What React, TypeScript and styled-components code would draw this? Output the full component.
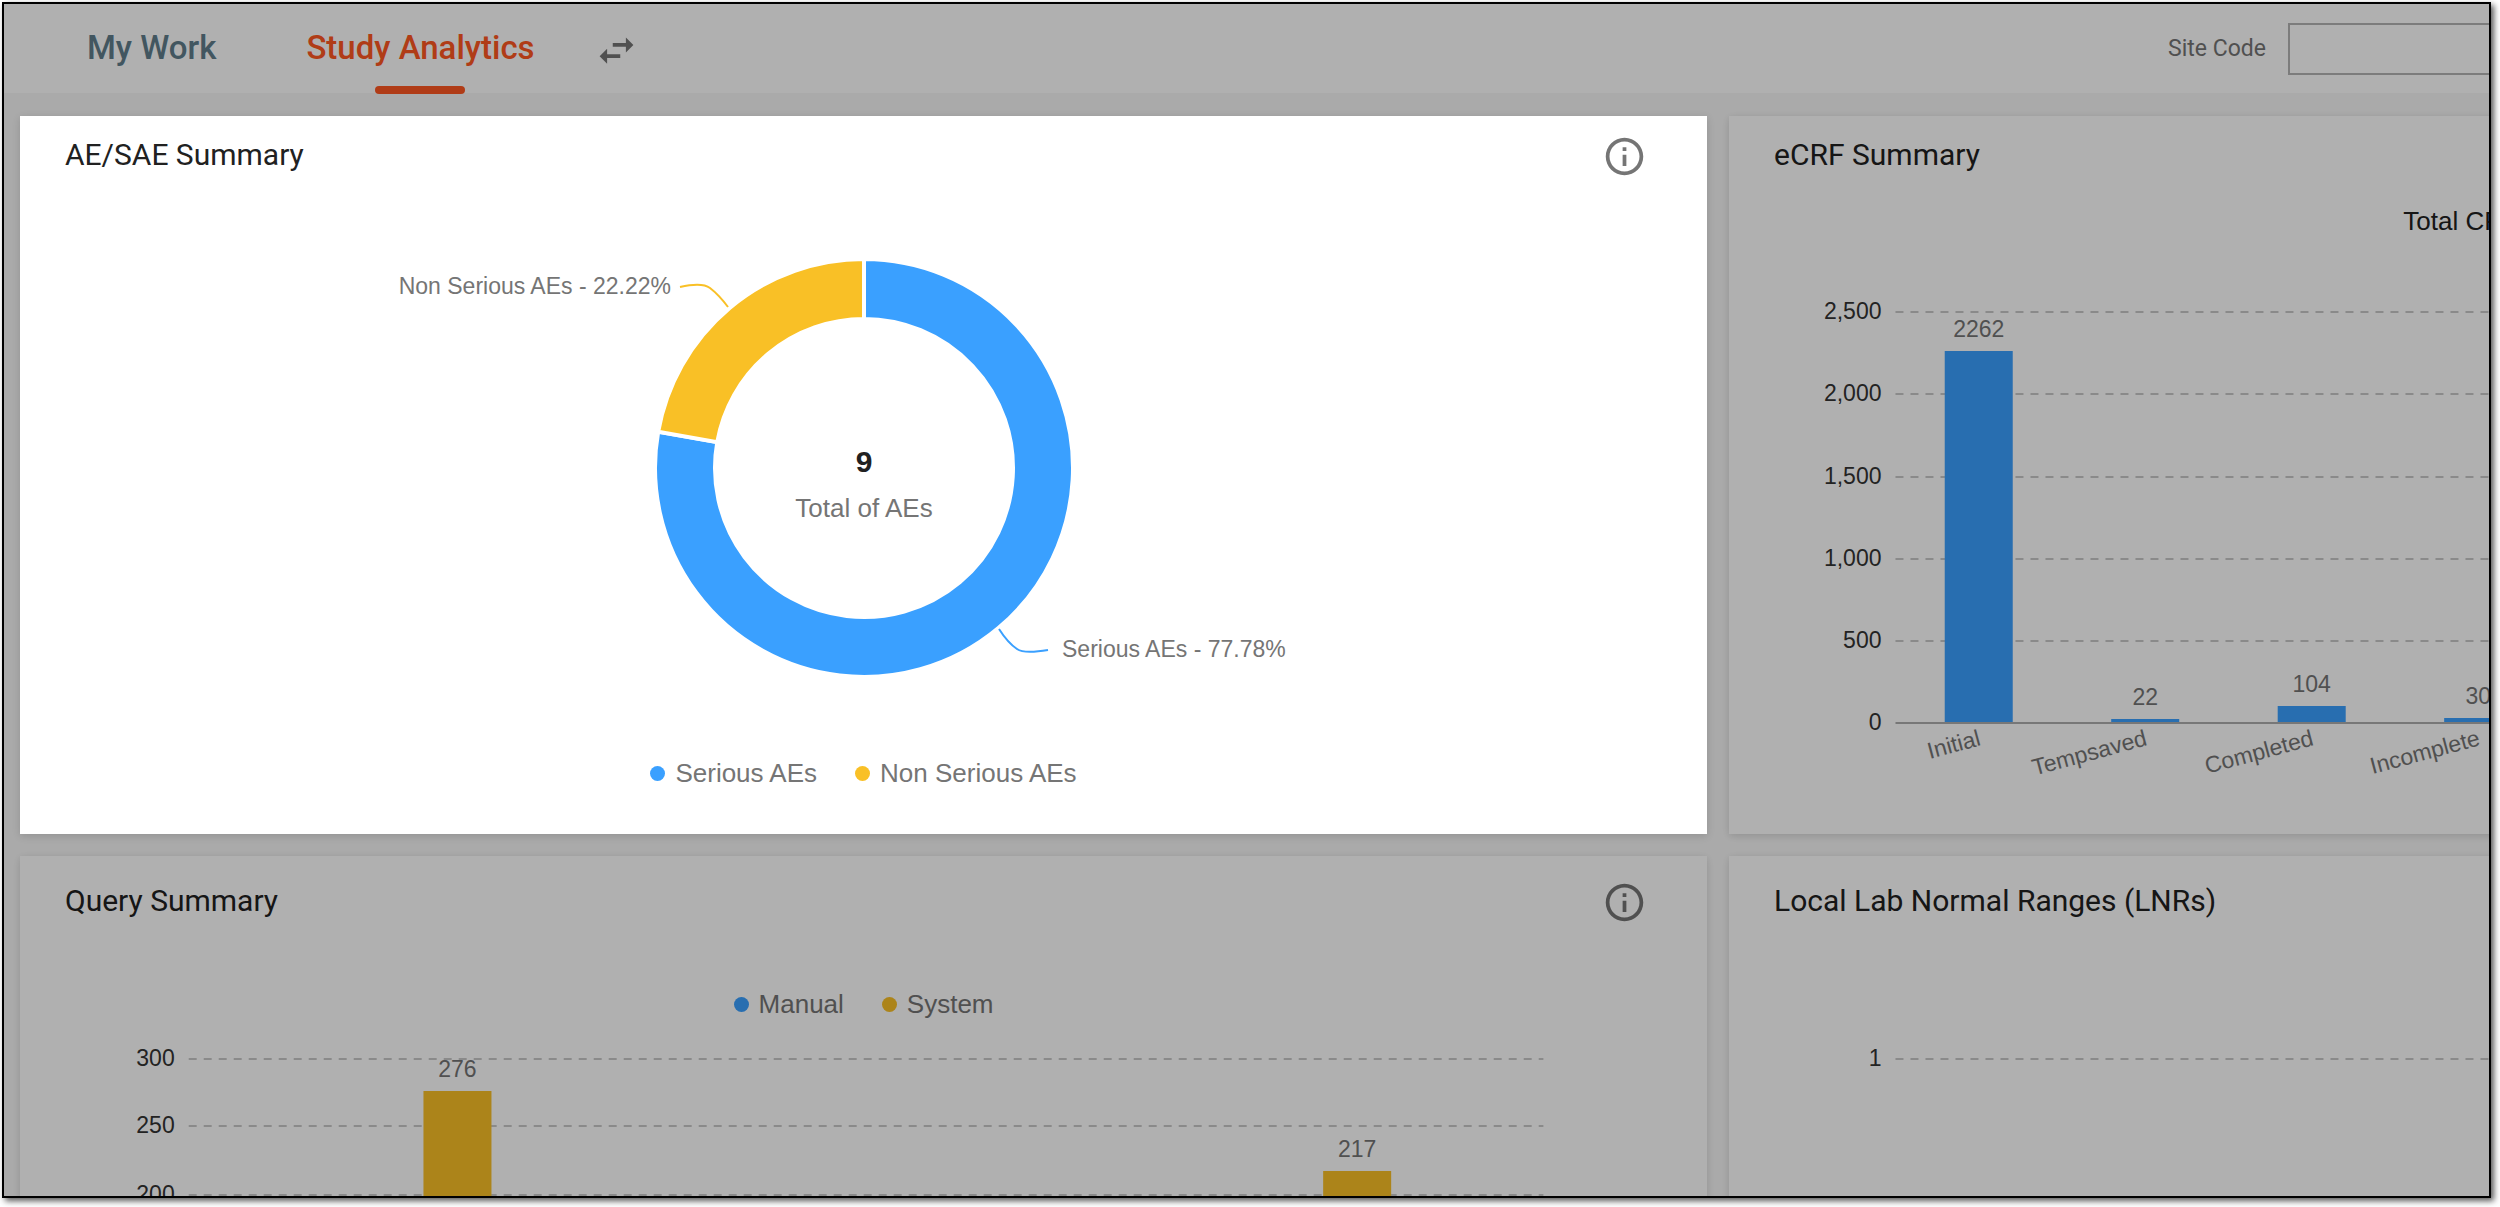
import React from "react";
import styled, { createGlobalStyle } from "styled-components";

const sans = '"Liberation Sans", Arial, Helvetica, sans-serif';
const blue = "#3aa0ff";
const amber = "#f9c026";

const GlobalStyle = createGlobalStyle`
  *, *::before, *::after { box-sizing: border-box; }
  body { margin: 0; background: #fff; overflow: hidden; }
`;

const Page = styled.div`
  height: 100vh;
  padding: 2px 9px 9px 2px;
  font-family: Roboto, ${sans};
`;

const Frame = styled.div`
  position: relative;
  height: 100%;
  overflow: hidden;
  border: 2px solid #000;
  background: #f7f7f7;
  box-shadow: 3px 3px 6px rgba(0, 0, 0, 0.65);
`;

const Scrim = styled.div`
  position: absolute;
  inset: 0;
  z-index: 1;
  background: rgba(0, 0, 0, 0.31);
  pointer-events: none;
`;

const TopBar = styled.header`
  display: flex;
  align-items: center;
  height: 89px;
  padding-left: 83px;
  background: #fff;
`;

const Tabs = styled.nav`
  display: flex;
  gap: 90px;
  height: 100%;
`;

const Tab = styled.a<{ $active?: boolean }>`
  display: flex;
  flex-direction: column;
  align-items: center;
  height: 100%;
  padding-top: 24px;
  color: ${(p) => (p.$active ? "#ff5722" : "#607d8b")};
  font-size: 33px;
  font-weight: 500;
  line-height: 40px;
  text-decoration: none;

  &::after {
    content: "";
    width: 90px;
    height: 8px;
    margin-top: 18px;
    flex: none;
    border-radius: 4px;
    background: ${(p) => (p.$active ? "#ff5722" : "transparent")};
  }
`;

const IconButton = styled.button`
  display: flex;
  flex: none;
  padding: 0;
  border: 0;
  background: none;
  color: #757575;
`;

const SwapButton = styled(IconButton)`
  margin-left: 59px;
  padding-top: 4px;
`;

const Filter = styled.div`
  display: flex;
  align-items: center;
  gap: 22px;
  margin-left: auto;
`;

const FilterLabel = styled.label`
  color: #757575;
  font-size: 23px;
`;

const FilterInput = styled.input`
  width: 201px;
  height: 52px;
  padding: 0 16px;
  border: 2px solid #b4b4b4;
  border-right: 0;
  background: #fff;
  font: inherit;
  font-size: 23px;
`;

const Board = styled.main`
  display: grid;
  grid-template-columns: 68.33% 67.43%;
  gap: 22px;
  padding: 23px 0 0 16px;
`;

const Card = styled.section<{ $spotlight?: boolean; $roomy?: boolean }>`
  position: relative;
  z-index: ${(p) => (p.$spotlight ? 2 : 0)};
  min-width: 0;
  padding-top: ${(p) => (p.$roomy ? 24 : 18)}px;
  background: #fff;
  box-shadow: 0 2px 8px rgba(0, 0, 0, 0.14);
`;

const CardHead = styled.div`
  display: flex;
  justify-content: space-between;
  height: 45px;
  padding: 0 60px 0 45px;
`;

const CardTitle = styled.h2`
  margin: 0;
  color: #212121;
  font-size: 30px;
  font-weight: 400;
  line-height: 42px;
`;

const LegendList = styled.ul<{ $place: "above" | "below" }>`
  display: flex;
  justify-content: center;
  gap: 38px;
  margin: 0;
  padding: ${(p) => (p.$place === "above" ? "64px 0 0" : "0 0 46px")};
  list-style: none;
  font-family: ${sans};
`;

const LegendItem = styled.li<{ $color: string }>`
  display: flex;
  align-items: center;
  gap: 10px;
  color: #757575;
  font-size: 26px;
  line-height: 30px;

  &::before {
    content: "";
    width: 15px;
    height: 15px;
    border-radius: 50%;
    background: ${(p) => p.$color};
  }
`;

const Chart = styled.svg`
  display: block;
  width: 100%;
  font-family: ${sans};
  font-size: 23px;
`;

const Donut = styled(Chart)`
  width: 1000px;
  margin: 0 auto;
`;

const Muted = styled.text`
  fill: #757575;
`;

const AxisText = styled.text`
  fill: #333;
`;

const Caption = styled.text`
  fill: #212121;
  font-size: 26px;
`;

const DonutTotal = styled.text`
  fill: #212121;
  font-size: 30px;
  font-weight: 700;
`;

const DonutCaption = styled.text`
  fill: #757575;
  font-size: 26px;
`;

function InfoIcon() {
  return (
    <svg width="45" height="45" viewBox="0 0 24 24" fill="currentColor" aria-hidden="true">
      <path d="M11 7h2v2h-2zm0 4h2v6h-2zm1-9C6.48 2 2 6.48 2 12s4.48 10 10 10 10-4.48 10-10S17.52 2 12 2zm0 18c-4.41 0-8-3.59-8-8s3.59-8 8-8 8 3.59 8 8-3.59 8-8 8z" />
    </svg>
  );
}

function SwapIcon() {
  return (
    <svg width="45" height="45" viewBox="0 0 24 24" fill="currentColor" aria-hidden="true">
      <path d="M6.99 11L3 15l3.99 4v-3H14v-2H6.99v-3zM21 9l-3.99-4v3H10v2h7.01v3L21 9z" />
    </svg>
  );
}

function Legend({ items, place }: { items: [string, string][]; place: "above" | "below" }) {
  return (
    <LegendList $place={place}>
      {items.map(([name, color]) => (
        <LegendItem key={name} $color={color}>
          {name}
        </LegendItem>
      ))}
    </LegendList>
  );
}

type Bar = { at: string; value: number; name?: string };

type BarChartProps = {
  label: string;
  height: number;
  ticks: { y: number; text: string }[];
  zero: number;
  unit: number;
  color: string;
  bars: Bar[];
  axis?: boolean;
  caption?: string;
};

function BarChart({ label, height, ticks, zero, unit, color, bars, axis, caption }: BarChartProps) {
  return (
    <Chart height={height} role="img" aria-label={label}>
      {caption && (
        <Caption x="40.5%" y={51}>
          {caption}
        </Caption>
      )}
      {ticks.map((t) => (
        <React.Fragment key={t.text}>
          {!(axis && t.y === zero) && (
            <line x1="10%" x2="90.3%" y1={t.y} y2={t.y} stroke="#c9c9c9" strokeWidth="2" strokeDasharray="8 7" />
          )}
          <svg x="10%" y={t.y} overflow="visible">
            <AxisText x={-14} y={7} textAnchor="end">
              {t.text}
            </AxisText>
          </svg>
        </React.Fragment>
      ))}
      {bars.map((b) => {
        const top = Math.round(zero - b.value * unit);
        return (
          <svg key={b.at} x={b.at} overflow="visible">
            <rect x={-34} y={top} width={68} height={zero - top} fill={color} />
            <Muted x={0} y={top - 14} textAnchor="middle">
              {b.value}
            </Muted>
            {b.name && (
              <Muted textAnchor="end" transform={`translate(3 ${zero + 22}) rotate(-15)`}>
                {b.name}
              </Muted>
            )}
          </svg>
        );
      })}
      {axis && <line x1="10%" x2="90%" y1={zero} y2={zero} stroke="#adadad" strokeWidth="2" />}
    </Chart>
  );
}

/* Ring segment between two clockwise angles measured from twelve o'clock. */
function ring(cx: number, cy: number, outer: number, inner: number, from: number, to: number) {
  const point = (r: number, deg: number) => {
    const a = ((deg - 90) * Math.PI) / 180;
    return `${(cx + r * Math.cos(a)).toFixed(2)} ${(cy + r * Math.sin(a)).toFixed(2)}`;
  };
  const large = to - from > 180 ? 1 : 0;
  return `M${point(outer, from)}A${outer} ${outer} 0 ${large} 1 ${point(outer, to)}L${point(inner, to)}A${inner} ${inner} 0 ${large} 0 ${point(inner, from)}Z`;
}

function AeDonut() {
  return (
    <Donut height={579} viewBox="0 0 1000 579" role="img" aria-label="AE/SAE split">
      <path d={ring(500, 289, 209, 149, 0, 280)} fill={blue} stroke="#fff" strokeWidth="4" />
      <path d={ring(500, 289, 209, 149, 280, 360)} fill={amber} stroke="#fff" strokeWidth="4" />
      <path d="M316 108Q338 103 346 109Q355 116 364 128" fill="none" stroke={amber} strokeWidth="2" />
      <path d="M635 450Q644 464 653 470Q660 475 684 471" fill="none" stroke={blue} strokeWidth="2" />
      <Muted x={307} y={115} textAnchor="end">
        Non Serious AEs - 22.22%
      </Muted>
      <Muted x={698} y={478}>
        Serious AEs - 77.78%
      </Muted>
      <DonutTotal x={500} y={293} textAnchor="middle">
        9
      </DonutTotal>
      <DonutCaption x={500} y={338} textAnchor="middle">
        Total of AEs
      </DonutCaption>
    </Donut>
  );
}

export default function App() {
  return (
    <Page>
      <GlobalStyle />
      <Frame>
        <TopBar>
          <Tabs>
            <Tab href="#my-work">My Work</Tab>
            <Tab href="#study-analytics" $active aria-current="page">
              Study Analytics
            </Tab>
          </Tabs>
          <SwapButton type="button" aria-label="Switch view">
            <SwapIcon />
          </SwapButton>
          <Filter>
            <FilterLabel htmlFor="site-code">Site Code</FilterLabel>
            <FilterInput id="site-code" type="text" />
          </Filter>
        </TopBar>

        <Board>
          <Card $spotlight>
            <CardHead>
              <CardTitle>AE/SAE Summary</CardTitle>
              <IconButton type="button" aria-label="About AE/SAE Summary">
                <InfoIcon />
              </IconButton>
            </CardHead>
            <AeDonut />
            <Legend
              place="below"
              items={[
                ["Serious AEs", blue],
                ["Non Serious AEs", amber],
              ]}
            />
          </Card>

          <Card>
            <CardHead>
              <CardTitle>eCRF Summary</CardTitle>
            </CardHead>
            <BarChart
              label="eCRF Summary"
              caption="Total CRF"
              height={640}
              zero={544}
              unit={0.1646}
              color={blue}
              axis
              ticks={[
                { y: 133, text: "2,500" },
                { y: 215, text: "2,000" },
                { y: 298, text: "1,500" },
                { y: 380, text: "1,000" },
                { y: 462, text: "500" },
                { y: 544, text: "0" },
              ]}
              bars={[
                { at: "15%", value: 2262, name: "Initial" },
                { at: "25%", value: 22, name: "Tempsaved" },
                { at: "35%", value: 104, name: "Completed" },
                { at: "45%", value: 30, name: "Incomplete" },
              ]}
            />
          </Card>

          <Card $roomy>
            <CardHead>
              <CardTitle>Query Summary</CardTitle>
              <IconButton type="button" aria-label="About Query Summary">
                <InfoIcon />
              </IconButton>
            </CardHead>
            <Legend
              place="above"
              items={[
                ["Manual", blue],
                ["System", amber],
              ]}
            />
            <BarChart
              label="Query Summary"
              height={600}
              zero={447}
              unit={1.36}
              color={amber}
              ticks={[
                { y: 40, text: "300" },
                { y: 107, text: "250" },
                { y: 176, text: "200" },
              ]}
              bars={[
                { at: "25.93%", value: 276 },
                { at: "79.26%", value: 217 },
              ]}
            />
          </Card>

          <Card $roomy>
            <CardHead>
              <CardTitle>Local Lab Normal Ranges (LNRs)</CardTitle>
            </CardHead>
            <BarChart
              label="Local Lab Normal Ranges"
              height={600}
              zero={542}
              unit={1}
              color={blue}
              ticks={[{ y: 134, text: "1" }]}
              bars={[]}
            />
          </Card>
        </Board>
        <Scrim />
      </Frame>
    </Page>
  );
}
